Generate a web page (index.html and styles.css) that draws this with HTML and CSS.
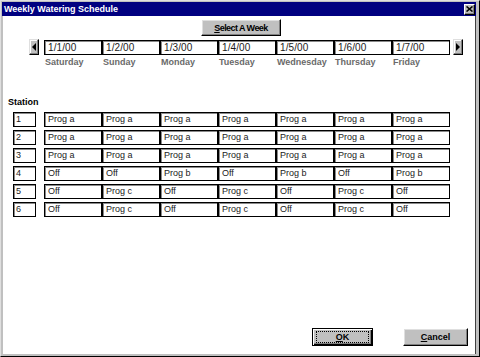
FILE: index.html
```html
<!DOCTYPE html>
<html>
<head>
<meta charset="utf-8">
<title>Weekly Watering Schedule</title>
<link rel="stylesheet" href="styles.css">
</head>
<body>
<div class="window">
  <div class="titlebar">
    <span class="title">Weekly Watering Schedule</span>
    <span class="close"><svg width="7" height="6" viewBox="0 0 7 6"><path d="M0.5 0.5 L6.5 5.5 M6.5 0.5 L0.5 5.5" stroke="#000" stroke-width="1.6" fill="none"/></svg></span>
  </div>
  <div class="client">
    <div class="select-row"><button class="btn select"><u>S</u>elect A Week</button></div>
    <div class="week">
      <span class="arrow"><svg width="4" height="8" viewBox="0 0 4 8"><path d="M4 0 L0 4 L4 8 Z" fill="#000"/></svg></span>
      <div class="days">
        <div class="day"><div class="field date">1/1/00</div><div class="dayname">Saturday</div></div>
        <div class="day"><div class="field date">1/2/00</div><div class="dayname">Sunday</div></div>
        <div class="day"><div class="field date">1/3/00</div><div class="dayname">Monday</div></div>
        <div class="day"><div class="field date">1/4/00</div><div class="dayname">Tuesday</div></div>
        <div class="day"><div class="field date">1/5/00</div><div class="dayname">Wednesday</div></div>
        <div class="day"><div class="field date">1/6/00</div><div class="dayname">Thursday</div></div>
        <div class="day"><div class="field date">1/7/00</div><div class="dayname">Friday</div></div>
      </div>
      <span class="arrow right"><svg width="4" height="8" viewBox="0 0 4 8"><path d="M0 0 L4 4 L0 8 Z" fill="#000"/></svg></span>
    </div>
    <div class="station-label">Station</div>
    <div class="grid">
      <div class="row"><div class="field num">1</div><div class="field cell">Prog a</div><div class="field cell">Prog a</div><div class="field cell">Prog a</div><div class="field cell">Prog a</div><div class="field cell">Prog a</div><div class="field cell">Prog a</div><div class="field cell">Prog a</div></div>
      <div class="row"><div class="field num">2</div><div class="field cell">Prog a</div><div class="field cell">Prog a</div><div class="field cell">Prog a</div><div class="field cell">Prog a</div><div class="field cell">Prog a</div><div class="field cell">Prog a</div><div class="field cell">Prog a</div></div>
      <div class="row"><div class="field num">3</div><div class="field cell">Prog a</div><div class="field cell">Prog a</div><div class="field cell">Prog a</div><div class="field cell">Prog a</div><div class="field cell">Prog a</div><div class="field cell">Prog a</div><div class="field cell">Prog a</div></div>
      <div class="row"><div class="field num">4</div><div class="field cell">Off</div><div class="field cell">Off</div><div class="field cell">Prog b</div><div class="field cell">Off</div><div class="field cell">Prog b</div><div class="field cell">Off</div><div class="field cell">Prog b</div></div>
      <div class="row"><div class="field num">5</div><div class="field cell">Off</div><div class="field cell">Prog c</div><div class="field cell">Off</div><div class="field cell">Prog c</div><div class="field cell">Off</div><div class="field cell">Prog c</div><div class="field cell">Off</div></div>
      <div class="row"><div class="field num">6</div><div class="field cell">Off</div><div class="field cell">Prog c</div><div class="field cell">Off</div><div class="field cell">Prog c</div><div class="field cell">Off</div><div class="field cell">Prog c</div><div class="field cell">Off</div></div>
    </div>
    <div class="footer">
      <button class="btn default ok"><span class="focus"><u>O</u>K</span></button>
      <button class="btn cancel"><u>C</u>ancel</button>
    </div>
  </div>
</div>
</body>
</html>
```

FILE: styles.css
```css
* { box-sizing: border-box; }
body {
  margin: 0;
  font-family: "Liberation Sans", Arial, sans-serif;
  font-size: 9px;
  background: #fff;
}
.window {
  width: 480px;
  height: 357px;
  background: #c0c0c0;
  border-top: 1px solid #dfdfdf;
  border-left: 1px solid #dfdfdf;
  border-right: 1px solid #000;
  border-bottom: 1px solid #000;
  padding: 1px 3px 2px 1px;
  display: flex;
  flex-direction: column;
}
.titlebar {
  height: 14px;
  background: #000080;
  color: #fff;
  font-weight: bold;
  display: flex;
  align-items: center;
  justify-content: space-between;
  padding: 0 1px 0 2px;
}
.title { line-height: 14px; }
.close {
  width: 11px;
  height: 11px;
  background: #c0c0c0;
  border: 1px solid;
  border-color: #fff #000 #000 #fff;
  box-shadow: inset -1px -1px 0 #808080;
  display: flex;
  align-items: center;
  justify-content: center;
}
.close svg { display: block; }
.client {
  flex: 1;
  background: #fff;
  margin-left: 1px;
  display: flex;
  flex-direction: column;
  border-right: 1px solid #404040;
}
.btn {
  background: #c0c0c0;
  border: 1px solid;
  border-color: #fff #000 #000 #fff;
  box-shadow: inset -1px -1px 0 #808080, inset 1px 1px 0 #dfdfdf;
  font-family: "Liberation Sans", Arial, sans-serif;
  font-weight: bold;
  font-size: 9px;
  color: #000;
  padding: 0;
  display: flex;
  align-items: center;
  justify-content: center;
}
.select-row { padding-top: 3px; display: flex; }
.select {
  width: 80px;
  height: 17px;
  margin-left: 198px;
  letter-spacing: -0.55px;
}
.week {
  margin-top: 4px;
  display: flex;
  align-items: flex-start;
  padding-left: 26px;
}
.arrow {
  width: 10px;
  height: 16px;
  margin-top: -1px;
  background: #c0c0c0;
  border: 1px solid;
  border-color: #dfdfdf #000 #000 #dfdfdf;
  box-shadow: inset -1px -1px 0 #808080, inset 1px 1px 0 #fff;
  display: flex;
  align-items: center;
  justify-content: center;
}
.arrow svg { display: block; }
.days {
  display: flex;
  margin-left: 5px;
  margin-right: 3px;
}
.day { width: 58px; }
.field {
  height: 15px;
  border: 1px solid #000;
  box-shadow: inset 1px 1px 0 #8a8a8a;
  padding-left: 3px;
  line-height: 13px;
  color: #1a1a1a;
  white-space: nowrap;
  overflow: hidden;
  background: #fff;
}
.date { font-size: 10px; letter-spacing: 0.1px; }
.dayname {
  margin-top: 2px;
  padding-left: 1px;
  line-height: 11px;
  color: #6a6a6a;
  font-weight: bold;
}
.station-label {
  margin-top: 29px;
  padding-left: 5px;
  line-height: 11px;
  font-weight: bold;
  color: #000;
}
.grid {
  margin-top: 4px;
  padding-left: 10px;
  display: flex;
  flex-direction: column;
  gap: 3px;
}
.row { display: flex; height: 15px; }
.num { width: 23px; margin-right: 8px; padding-left: 2px; }
.cell { width: 58px; }
.footer {
  margin-top: auto;
  display: flex;
  justify-content: flex-end;
  gap: 30px;
  padding: 0 7px 8px 0;
}
.ok {
  width: 61px;
  height: 18px;
  border: 1px solid #000;
  box-shadow: inset 1px 1px 0 #fff, inset -1px -1px 0 #000, inset -2px -2px 0 #808080;
}
.focus {
  display: flex;
  align-items: center;
  justify-content: center;
  width: 53px;
  height: 12px;
  border: 1px dotted #000;
}
.cancel {
  width: 65px;
  height: 18px;
}
```
